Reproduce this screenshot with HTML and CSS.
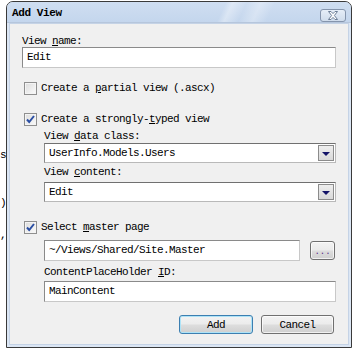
FILE: index.html
```html
<!DOCTYPE html>
<html lang="en">
<head>
  <meta charset="UTF-8">
  <title>Add View</title>
  <link rel="stylesheet" href="styles.css">
</head>
<body>
  <div class="editor">
    <div class="line"></div><div class="line"></div><div class="line"></div>
    <div class="line"></div><div class="line"></div><div class="line"></div>
    <div class="line"></div><div class="line"></div><div class="line"></div>
    <div class="line">s</div>
    <div class="line"></div><div class="line"></div>
    <div class="line">)</div>
    <div class="line"></div>
    <div class="line">,</div>
  </div>

  <div class="dialog">
    <div class="titlebar">
      <span class="title">Add View</span>
      <span class="close">
        <svg width="12" height="9" viewBox="0 0 12 9">
          <path d="M1.5 0.5 L4 0.5 L6 2.6 L8 0.5 L10.5 0.5 L7.4 4.5 L10.5 8.5 L8 8.5 L6 6.4 L4 8.5 L1.5 8.5 L4.6 4.5 Z" fill="#fff" stroke="#6b7d96" stroke-width="1"/>
        </svg>
      </span>
    </div>
    <div class="client">
      <div class="label first">View <u>n</u>ame:</div>
      <div class="field">Edit</div>

      <div class="check-row partial">
        <span class="checkbox"></span>
        <span>Create a <u>p</u>artial view (.ascx)</span>
      </div>

      <div class="check-row typed">
        <span class="checkbox checked">
          <svg width="9" height="9" viewBox="0 0 9 9"><path d="M1 4.5 L3.2 7 L8 1" fill="none" stroke="#2a4ea3" stroke-width="2"/></svg>
        </span>
        <span>Create a strongly-<u>t</u>yped view</span>
      </div>

      <div class="sub">
        <div class="label data-label">View <u>d</u>ata class:</div>
        <div class="combo">
          <span class="combo-text">UserInfo.Models.Users</span>
          <span class="combo-btn"><span class="arrow"></span></span>
        </div>
        <div class="label content-label">View <u>c</u>ontent:</div>
        <div class="combo second">
          <span class="combo-text">Edit</span>
          <span class="combo-btn"><span class="arrow"></span></span>
        </div>
      </div>

      <div class="check-row master">
        <span class="checkbox checked">
          <svg width="9" height="9" viewBox="0 0 9 9"><path d="M1 4.5 L3.2 7 L8 1" fill="none" stroke="#2a4ea3" stroke-width="2"/></svg>
        </span>
        <span>Select <u>m</u>aster page</span>
      </div>

      <div class="sub">
        <div class="master-row">
          <div class="field grow">~/Views/Shared/Site.Master</div>
          <span class="button small">...</span>
        </div>
        <div class="label holder-label">ContentPlaceHolder <u>I</u>D:</div>
        <div class="field holder">MainContent</div>
      </div>

      <div class="actions">
        <span class="button default">Add</span>
        <span class="button">Cancel</span>
      </div>
    </div>
  </div>
</body>
</html>
```

FILE: styles.css
```css
* {
  box-sizing: border-box;
}
body {
  margin: 0;
  width: 359px;
  height: 357px;
  background: #fff;
  position: relative;
  overflow: hidden;
  font-family: "Liberation Mono", monospace;
  font-size: 11px;
  letter-spacing: -0.6px;
  color: #000;
}
u {
  text-underline-offset: 1px;
}

/* code behind the dialog */
.editor {
  padding-top: 3px;
  line-height: 16px;
}
.line {
  height: 16px;
}

.dialog {
  position: absolute;
  left: 6px;
  top: 1px;
  width: 346px;
  height: 347px;
  border: 1px solid #3a3a3a;
  border-radius: 7px 7px 0 0;
  background: #dbe6f4;
  padding: 0 2px 2px;
  display: flex;
  flex-direction: column;
}
.titlebar {
  height: 21px;
  margin: 0 -2px;
  border-radius: 6px 6px 0 0;
  border-bottom: 1px solid #b6c6dc;
  background:
    linear-gradient(115deg, transparent 62%, rgba(255,255,255,0.35) 64%, transparent 68%, rgba(255,255,255,0.3) 72%, transparent 76%),
    linear-gradient(#cfdef1, #c4d6ed);
  display: flex;
  align-items: center;
  padding: 0 5px 0 5px;
}
.title {
  font-weight: bold;
  letter-spacing: -0.4px;
  flex: 1;
  padding-top: 2px;
}
.close {
  width: 26px;
  height: 13px;
  margin-top: 6px;
  border: 1px solid #8595ad;
  border-radius: 3px;
  background: linear-gradient(#e6eef8, #cfdcec);
  display: flex;
  align-items: center;
  justify-content: center;
}

.client {
  flex: 1;
  background: #f0f0f0;
  border: 1px solid #c5d3e6;
  padding: 0 12px;
  display: flex;
  flex-direction: column;
}
.label {
  height: 12px;
  line-height: 12px;
}
.label.first { margin-top: 11px; }
.data-label { margin-top: 4px; }
.content-label { margin-top: 3px; }
.holder-label { margin-top: 5px; }

.field {
  height: 21px;
  line-height: 19px;
  background: #fff;
  border: 1px solid;
  border-color: #8a8a8a #c8c8c8 #c8c8c8 #8a8a8a;
  padding-left: 4px;
  white-space: nowrap;
  overflow: hidden;
}
.field.holder { margin-top: 3px; }
.grow { flex: 1; }

.check-row {
  height: 13px;
  line-height: 13px;
  display: flex;
  align-items: center;
  gap: 4px;
  padding-left: 2px;
}
.check-row.partial { margin-top: 14px; }
.check-row.typed { margin-top: 18px; }
.check-row.master { margin-top: 19px; }
.checkbox {
  width: 13px;
  height: 13px;
  border: 1px solid #8f8f8f;
  background: linear-gradient(135deg, #dcdcdc, #fbfbfb);
  box-shadow: inset 0 0 0 1px #f4f4f4;
  display: flex;
  align-items: center;
  justify-content: center;
}

.sub {
  padding-left: 22px;
  display: flex;
  flex-direction: column;
}
.combo {
  height: 20px;
  margin-top: 1px;
  background: #fff;
  border: 1px solid;
  border-color: #707070 #b9b9b9 #b9b9b9 #8a8a8a;
  padding: 1px;
  display: flex;
}
.combo.second { margin-top: 4px; }
.combo-text {
  flex: 1;
  line-height: 16px;
  padding-left: 3px;
}
.combo-btn {
  width: 16px;
  border: 1px solid #8b8b8b;
  background: linear-gradient(#eeeeee, #d9d9d9);
  display: flex;
  align-items: center;
  justify-content: center;
}
.arrow {
  width: 0;
  height: 0;
  border-left: 4px solid transparent;
  border-right: 4px solid transparent;
  border-top: 4px solid #141468;
  position: relative;
  top: 1px;
}

.master-row {
  margin-top: 6px;
  display: flex;
  align-items: center;
  gap: 10px;
}

.button {
  height: 19px;
  border: 1px solid #707070;
  border-radius: 3px;
  background: linear-gradient(#f3f3f3 0%, #ebebeb 48%, #dddddd 52%, #cfcfcf 100%);
  box-shadow: inset 0 0 0 1px rgba(255,255,255,0.7);
  display: flex;
  align-items: center;
  justify-content: center;
  text-align: center;
}
.button.small {
  width: 25px;
  margin-right: 1px;
  font-size: 9px;
  letter-spacing: 0;
  color: #5a2a8a;
  padding-top: 2px;
}
.actions {
  margin-top: 13px;
  display: flex;
  justify-content: flex-end;
  gap: 8px;
  padding-right: 2px;
}
.actions .button {
  width: 73px;
}
.actions .button.default {
  width: 74px;
  border-color: #3c7fb1;
  box-shadow: inset 0 0 0 1px #aee3f7;
}
```
